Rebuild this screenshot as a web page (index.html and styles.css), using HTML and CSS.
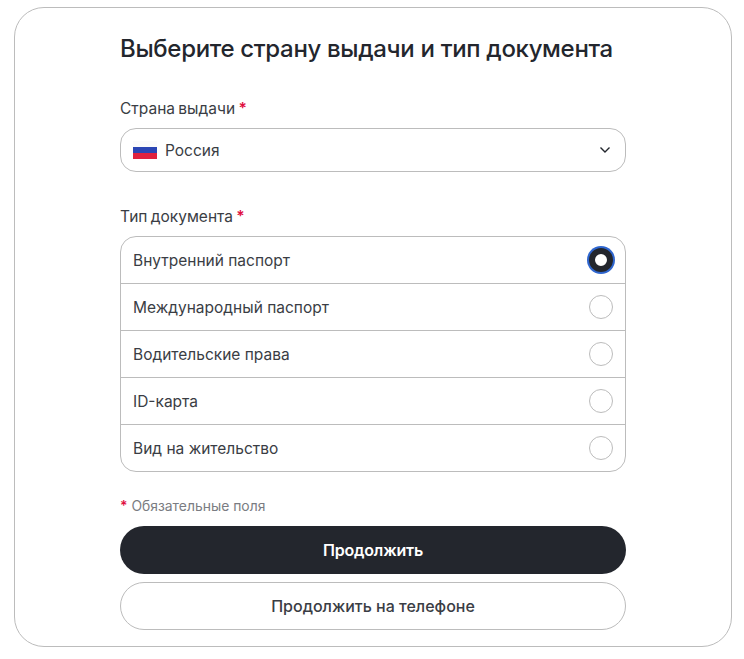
FILE: index.html
```html
<!DOCTYPE html>
<html lang="ru">
<head>
    <meta charset="UTF-8">
    <meta name="viewport" content="width=device-width, initial-scale=1.0">
    <title>Выбор документа</title>
    <link rel="stylesheet" href="styles.css">
</head>
<body>
    <div class="card">
        <div class="content">
            <h1 class="title">Выберите страну выдачи и тип документа</h1>

            <div class="label label-country">Страна выдачи <span class="req">*</span></div>
            <div class="select">
                <svg class="flag" width="24" height="18" viewBox="0 0 24 18">
                    <rect width="24" height="6" fill="#fbfbfb"/>
                    <rect y="6" width="24" height="6" fill="#2b46b4"/>
                    <rect y="12" width="24" height="6" fill="#e0213f"/>
                </svg>
                <span class="select-text">Россия</span>
                <svg class="chevron" width="12" height="8" viewBox="0 0 12 8">
                    <path d="M1.5 1.5 6 6l4.5-4.5" fill="none" stroke="#23262d" stroke-width="1.4"/>
                </svg>
            </div>

            <div class="label label-type">Тип документа <span class="req">*</span></div>
            <div class="options">
                <div class="option">Внутренний паспорт <span class="radio checked"></span></div>
                <div class="option">Международный паспорт <span class="radio"></span></div>
                <div class="option">Водительские права <span class="radio"></span></div>
                <div class="option">ID-карта <span class="radio"></span></div>
                <div class="option">Вид на жительство <span class="radio"></span></div>
            </div>

            <div class="note"><span class="req">*</span> Обязательные поля</div>
            <button class="btn btn-primary">Продолжить</button>
            <button class="btn btn-secondary">Продолжить на телефоне</button>
        </div>
    </div>
</body>
</html>
```

FILE: styles.css
```css
* {
    box-sizing: border-box;
}
body {
    margin: 0;
    height: 659px;
    overflow: hidden;
    background-color: #fff;
    font-family: Inter, 'Noto Sans', sans-serif;
    color: #23262d;
}
.card {
    margin: 7px 12px 0 14px;
    height: 640px;
    border: 1px solid #bcbcbc;
    border-radius: 30px;
    background-color: #fff;
}
.content {
    width: 506px;
    margin-left: 105px;
    padding-top: 25px;
}
.title {
    margin: 0;
    font-size: 24px;
    line-height: 32px;
    font-weight: 450;
    letter-spacing: -0.33px;
}
.label {
    font-size: 15.5px;
    line-height: 20px;
    word-spacing: -1px;
    color: #3a3d44;
}
.label-country {
    margin-top: 34px;
}
.label-type {
    margin-top: 35px;
}
.req {
    color: #e0103f;
    font-weight: 600;
}
.select {
    display: flex;
    align-items: center;
    height: 44px;
    margin-top: 9px;
    padding: 0 15px 0 12px;
    border: 1px solid #bcbcbc;
    border-radius: 16px;
    font-size: 15.5px;
    color: #3a3d44;
}
.select-text {
    flex: 1;
    margin-left: 8px;
}
.chevron {
    margin-right: -1px;
}
.options {
    margin-top: 9px;
    border: 1px solid #bcbcbc;
    border-radius: 16px;
}
.option {
    display: flex;
    align-items: center;
    justify-content: space-between;
    height: 47px;
    padding: 0 12px;
    border-bottom: 1px solid #bcbcbc;
    font-size: 15.5px;
    color: #3a3d44;
}
.option:last-child {
    height: 46px;
    border-bottom: none;
}
.radio {
    width: 24px;
    height: 24px;
    border: 1px solid #bcbcbc;
    border-radius: 50%;
}
.radio.checked {
    background-color: #fff;
    border: 6px solid #23262d;
    box-shadow: 0 0 0 2px #2f66cf;
}
.note {
    margin-top: 25px;
    font-size: 13.9px;
    line-height: 18px;
    color: #7a7c82;
}
.btn {
    display: block;
    width: 100%;
    height: 48px;
    border-radius: 24px;
    font-family: inherit;
    font-size: 16px;
    font-weight: 600;
}
.btn-primary {
    margin-top: 11px;
    border: none;
    background-color: #23262d;
    color: #fff;
    letter-spacing: -0.2px;
}
.btn-secondary {
    margin-top: 8px;
    border: 1px solid #bcbcbc;
    background-color: #fff;
    color: #3a3d44;
    font-weight: 500;
}
```
